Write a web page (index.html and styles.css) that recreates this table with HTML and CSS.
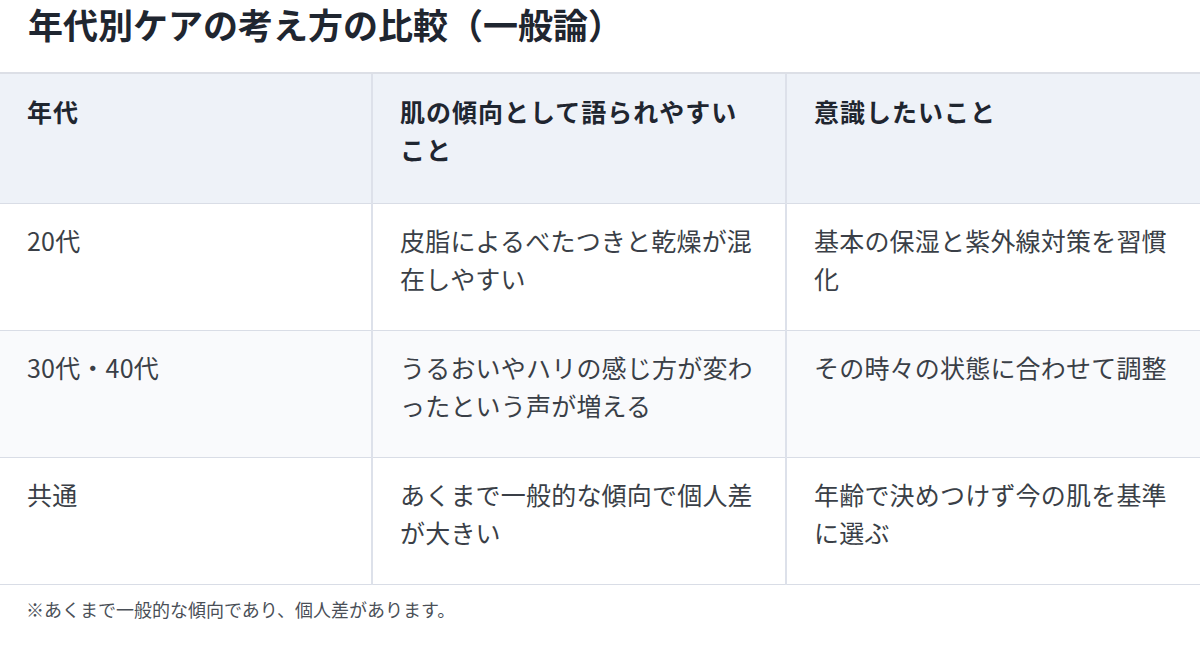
FILE: index.html
```html
<!DOCTYPE html>
<html lang="ja">
<head>
<meta charset="utf-8">
<link rel="stylesheet" href="styles.css">
</head>
<body>
<h2 class="title">年代別ケアの考え方の比較（一般論）</h2>
<table class="cmp">
  <thead>
    <tr>
      <th class="c1">年代</th>
      <th class="c2">肌の傾向として語られやすいこと</th>
      <th class="c3">意識したいこと</th>
    </tr>
  </thead>
  <tbody>
    <tr>
      <td>20代</td>
      <td>皮脂によるべたつきと乾燥が混在しやすい</td>
      <td>基本の保湿と紫外線対策を習慣化</td>
    </tr>
    <tr class="alt">
      <td>30代・40代</td>
      <td>うるおいやハリの感じ方が変わったという声が増える</td>
      <td>その時々の状態に合わせて調整</td>
    </tr>
    <tr>
      <td>共通</td>
      <td>あくまで一般的な傾向で個人差が大きい</td>
      <td>年齢で決めつけず今の肌を基準に選ぶ</td>
    </tr>
  </tbody>
</table>
<p class="note">※あくまで一般的な傾向であり、個人差があります。</p>
</body>
</html>
```

FILE: styles.css
```css
html, body {
  margin: 0;
  padding: 0;
  background: #ffffff;
}
body {
  font-family: "Noto Sans CJK JP", "Noto Sans", sans-serif;
  color: #3a3f47;
  width: 1200px;
  overflow: hidden;
}
.title {
  margin: 0 0 24px 0;
  padding: 0 28px;
  font-size: 35px;
  line-height: 48px;
  font-weight: 700;
  color: #1f2630;
}
.cmp {
  width: 1200px;
  border-collapse: collapse;
  table-layout: fixed;
}
.cmp th, .cmp td {
  text-align: left;
  vertical-align: top;
  font-size: 25px;
  line-height: 37.5px;
  padding: 18px 26px 33px 27px;
  border-top: 1px solid #d9dde6;
  border-bottom: 1px solid #d9dde6;
}
.cmp th + th, .cmp td + td {
  border-left: 2px solid #dde1ea;
}
.cmp th {
  background: #eef2f8;
  font-weight: 700;
  color: #1f2630;
  letter-spacing: 1px;
  padding-top: 19px;
  padding-bottom: 35px;
  border-top: 2px solid #dcdfe6;
}
.cmp .c1 { width: 318px; }
.cmp .c2 { width: 359px; }
.cmp td {
  color: #3a3f47;
  font-weight: 400;
  letter-spacing: 0.2px;
}
.cmp tr.alt td {
  background: #f9fafc;
}
.note {
  margin: 11px 0 0 0;
  padding: 0 26px;
  font-size: 18px;
  line-height: 26px;
  color: #4a4f57;
}
```
